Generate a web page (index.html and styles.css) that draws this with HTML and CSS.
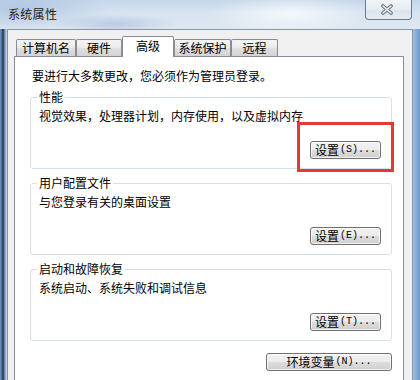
FILE: index.html
```html
<!DOCTYPE html>
<html lang="zh-CN">
<head>
<meta charset="utf-8">
<title>系统属性</title>
<link rel="stylesheet" href="styles.css">
</head>
<body>
<div class="window">
  <div class="titlebar">
    <span class="title">系统属性</span>
    <div class="close">
      <svg width="14" height="11" viewBox="0 0 14 11">
        <path d="M3 2 L11 9 M11 2 L3 9" stroke="#66717e" stroke-width="3.6" stroke-linecap="round" fill="none"/>
        <path d="M3 2 L11 9 M11 2 L3 9" stroke="#f3f5f8" stroke-width="1.6" stroke-linecap="round" fill="none"/>
      </svg>
    </div>
  </div>
  <div class="client">
    <div class="tabs">
      <div class="tab t1">计算机名</div>
      <div class="tab t2">硬件</div>
      <div class="tab t3 active">高级</div>
      <div class="tab t4">系统保护</div>
      <div class="tab t5">远程</div>
    </div>
    <div class="panel">
      <p class="intro">要进行大多数更改，您必须作为管理员登录。</p>
      <div class="group">
        <span class="legend">性能</span>
        <span class="desc">视觉效果，处理器计划，内存使用，以及虚拟内存</span>
        <button class="btn"><span class="cj">设置</span><span class="as">(S)...</span></button>
      </div>
      <div class="group">
        <span class="legend">用户配置文件</span>
        <span class="desc">与您登录有关的桌面设置</span>
        <button class="btn"><span class="cj">设置</span><span class="as">(E)...</span></button>
      </div>
      <div class="group">
        <span class="legend">启动和故障恢复</span>
        <span class="desc">系统启动、系统失败和调试信息</span>
        <button class="btn"><span class="cj">设置</span><span class="as">(T)...</span></button>
      </div>
      <button class="btn env"><span class="cj">环境变量</span><span class="as">(N)...</span></button>
    </div>
  </div>
</div>
<div class="highlight"></div>
</body>
</html>
```

FILE: styles.css
```css
html, body {
  margin: 0;
  padding: 0;
}
body {
  width: 420px;
  height: 380px;
  overflow: hidden;
  position: relative;
  font-family: "Noto Sans CJK SC", "Noto Sans", sans-serif;
  font-size: 12px;
  color: #000;
}
.window {
  height: 380px;
  box-sizing: border-box;
  padding: 0 7px;
  display: flex;
  flex-direction: column;
  background: linear-gradient(90deg, #7098c8 0, #4c6688 2px, #1f2c3c 3px, #7ea2cc 5px, #c8d8ea 7px, #d3e0ee 60px, #e4ecf5 200px, #eef3f8 320px, #e2ebf4 395px, #a6c3e2 412px, #6d98cc 420px);
}
.titlebar {
  height: 29px;
  flex: none;
  display: flex;
  justify-content: space-between;
  align-items: flex-start;
  margin: 0 -7px;
  padding: 0 7px;
  background:
    radial-gradient(ellipse 90px 14px at 115px 24px, rgba(120,150,200,0.35), rgba(120,150,200,0) 70%),
    radial-gradient(ellipse 120px 30px at 20px 10px, rgba(150,180,215,0.55), rgba(150,180,215,0) 75%),
    radial-gradient(ellipse 110px 26px at 290px 14px, rgba(255,255,255,0.75), rgba(255,255,255,0) 75%),
    linear-gradient(180deg, #c5d7ea 0, #d6e3f0 12px, #dfe8f2 29px);
}
.title {
  margin: 6px 0 0 1px;
  font-size: 12px;
  line-height: 16px;
  letter-spacing: 0.3px;
  color: #222;
}
.close {
  width: 47px;
  height: 20px;
  box-sizing: border-box;
  margin-right: 1px;
  border: 1px solid #6c7b8c;
  border-top: none;
  border-radius: 0 0 4px 4px;
  background: linear-gradient(180deg, #f1f4f8 0, #e6ecf2 50%, #dbe3ec 51%, #e6ecf3 100%);
  display: flex;
  align-items: center;
  justify-content: center;
  padding-right: 4px;
}
.close svg {
  display: block;
}
.client {
  flex: 1;
  min-height: 0;
  background: #f0f0f0;
  border: 1px solid #8a97a6;
  border-bottom: none;
  padding: 6px 8px 0 6px;
  display: flex;
  flex-direction: column;
}
.tabs {
  display: flex;
  align-items: flex-end;
  padding-left: 2px;
  flex: none;
}
.tab {
  height: 17px;
  box-sizing: border-box;
  border: 1px solid #898c95;
  border-bottom: none;
  border-radius: 2px 2px 0 0;
  background: linear-gradient(180deg, #f4f4f4 0, #ececec 45%, #dedede 55%, #d3d3d3 100%);
  display: flex;
  align-items: center;
  justify-content: center;
  line-height: 14px;
  font-size: 12px;
}
.t1 { width: 60px; }
.t2 { width: 46px; }
.t3 { width: 52px; }
.t4 { width: 57px; }
.t5 { width: 47px; }
.tab.active {
  height: 21px;
  margin-bottom: -1px;
  background: #fff;
  position: relative;
  z-index: 1;
  padding-bottom: 3px;
}
.panel {
  flex: 1;
  min-height: 0;
  background: #fff;
  border: 1px solid #898c95;
  border-bottom: none;
  padding: 11px 11px 0 15px;
  display: flex;
  flex-direction: column;
}
.intro {
  margin: 0 0 0 2px;
  line-height: 16px;
}
.group {
  margin-top: 13px;
  border: 1px solid #d5dfe5;
  border-radius: 3px;
  padding: 0 10px 9px 8px;
  display: flex;
  flex-direction: column;
}
.group + .group {
  margin-top: 14px;
}
.legend {
  align-self: flex-start;
  margin: -8px 0 0 -2px;
  padding: 0 2px;
  background: #fff;
  line-height: 14px;
}
.desc {
  margin-top: 4px;
  line-height: 16px;
}
.btn {
  align-self: flex-end;
  margin-top: 17px;
  width: 71px;
  height: 18px;
  flex: none;
  box-sizing: border-box;
  padding: 0;
  border: 1px solid #707070;
  border-radius: 3px;
  background: linear-gradient(180deg, #f2f2f2 0, #ebebeb 50%, #dddddd 51%, #cfcfcf 100%);
  box-shadow: inset 0 0 0 1px rgba(255,255,255,0.7);
  display: flex;
  align-items: center;
  justify-content: center;
  font-family: "Noto Sans CJK SC", sans-serif;
  font-size: 12px;
  line-height: 14px;
  color: #000;
}
.btn .cj {
  font-size: 12px;
}
.btn .as {
  font-family: "Liberation Mono", monospace;
  font-size: 10px;
  margin-left: 1px;
}
.env {
  margin-top: 12px;
  width: 126px;
}
.highlight {
  position: absolute;
  left: 297px;
  top: 122px;
  width: 97px;
  height: 50px;
  box-sizing: border-box;
  border: 3px solid #e4383b;
}
```
